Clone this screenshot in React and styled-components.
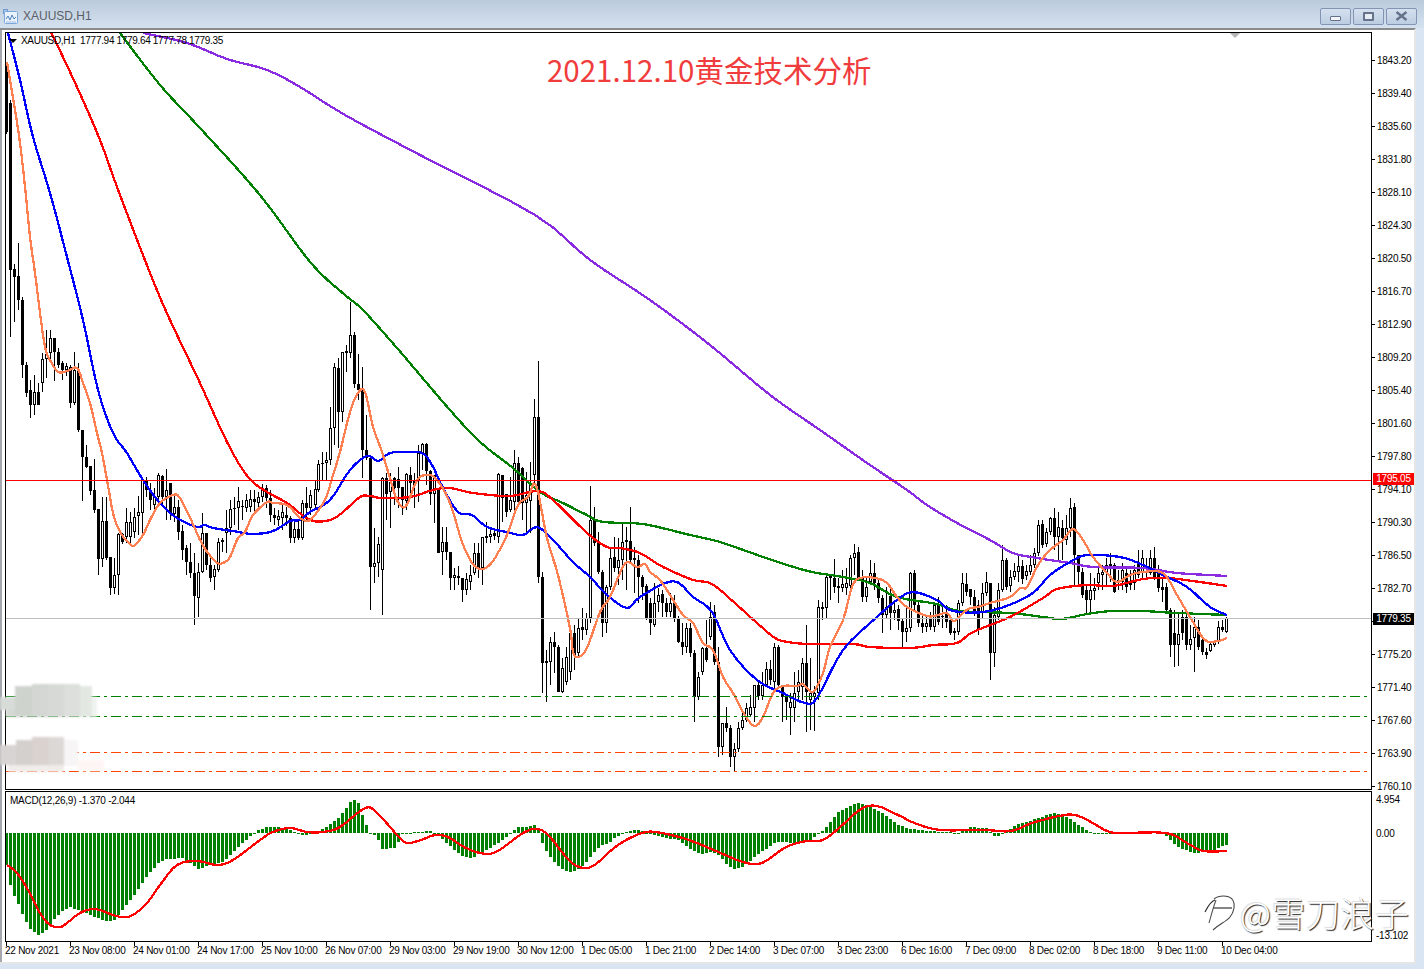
import React from 'react';
import styled, { createGlobalStyle } from 'styled-components';

// [x, bodyTop, bodyBottom, high, low, hollow]
const CANDLES = [
  [6,68,132,62,134,0],[10,103,270,100,337,0],[14,269,277,264,322,0],[18,276,300,243,310,0],[22,300,365,297,378,0],
  [26,365,393,362,397,0],[30,390,405,380,418,0],[34,392,405,375,415,1],[38,392,405,383,405,0],[42,359,383,353,392,1],
  [46,354,359,330,378,1],[50,338,353,330,362,1],[54,338,352,338,381,0],[58,352,365,348,368,0],[62,363,370,361,380,0],
  [66,366,370,363,376,1],[70,367,403,365,408,0],[74,370,403,352,405,1],[78,370,430,363,432,0],[82,430,457,430,501,0],
  [86,457,467,445,468,0],[90,466,491,466,495,0],[94,490,510,459,513,0],[98,509,559,509,575,0],[102,521,559,497,567,1],
  [106,521,558,497,560,0],[110,557,588,557,595,0],[114,575,588,558,594,1],[118,534,575,533,595,1],[122,534,542,533,544,0],
  [126,522,537,508,543,1],[130,522,537,512,543,1],[134,517,532,508,538,1],[138,512,516,496,535,1],[142,480,513,477,535,1],
  [146,480,490,477,497,0],[150,490,500,483,510,0],[154,497,505,488,512,1],[158,475,497,473,507,1],[162,476,497,475,505,0],
  [166,490,497,469,520,1],[170,483,513,483,520,0],[174,507,514,493,522,1],[178,507,532,500,540,0],[182,531,550,525,560,0],
  [186,548,562,545,575,0],[190,562,573,543,578,0],[194,573,596,553,625,0],[198,572,598,563,617,1],[202,533,572,513,573,1],
  [206,533,565,533,570,0],[210,565,578,558,582,0],[214,569,577,565,590,1],[218,542,570,538,572,1],[222,540,542,538,552,0],
  [226,528,533,510,553,1],[230,509,528,500,535,1],[234,508,509,497,525,0],[238,501,508,487,530,1],[242,506,507,500,520,0],
  [246,500,508,494,512,1],[250,499,507,490,512,1],[254,499,502,490,512,0],[258,497,503,492,510,1],[262,488,497,484,502,1],
  [266,488,498,485,508,0],[270,498,515,490,522,0],[274,515,518,508,525,0],[278,516,520,510,526,1],[282,512,518,505,530,1],
  [286,515,518,507,526,0],[290,518,538,516,543,0],[294,529,538,520,543,1],[298,529,538,520,540,0],[302,503,538,500,540,1],
  [306,503,508,487,520,0],[310,495,508,490,515,1],[315,489,505,480,510,1],[318,464,490,460,492,1],[322,463,464,452,480,0],
  [326,460,463,452,480,1],[330,428,460,407,465,1],[334,367,428,363,445,1],[338,368,412,358,448,0],[342,352,412,352,422,1],
  [346,351,353,345,372,0],[350,335,353,302,358,1],[354,335,384,332,388,0],[358,384,390,354,400,0],[362,389,450,367,478,0],
  [366,450,458,415,460,0],[370,458,567,458,610,0],[374,563,567,528,583,1],[378,544,563,537,577,1],[382,478,570,477,615,1],
  [386,478,494,473,520,0],[390,482,492,473,528,1],[394,478,488,477,505,0],[398,479,488,467,508,0],[402,487,500,487,515,0],
  [406,474,501,473,510,1],[410,475,483,467,495,0],[414,481,485,473,508,0],[418,453,480,445,502,1],[422,444,453,443,470,1],
  [426,444,471,443,485,0],[430,471,494,470,505,0],[434,475,494,475,523,1],[438,488,553,488,553,0],[442,542,552,527,575,1],
  [446,542,552,527,560,0],[450,552,578,552,590,0],[454,575,578,568,590,1],[458,576,578,566,585,0],[462,578,590,578,602,0],
  [466,579,590,573,595,1],[470,575,582,565,590,1],[474,553,573,543,575,1],[478,553,568,543,578,0],[482,537,568,537,585,1],
  [486,536,538,522,543,0],[490,534,537,528,543,1],[494,533,536,528,540,0],[498,474,537,473,543,1],[502,475,498,475,522,0],
  [506,494,512,494,517,0],[510,500,510,477,512,1],[514,463,502,450,512,1],[518,463,502,457,505,0],[522,468,503,467,520,0],
  [526,495,503,472,533,1],[530,484,501,462,533,1],[534,417,475,399,485,1],[538,417,577,361,583,0],[542,577,663,572,693,0],
  [546,661,663,650,702,0],[550,642,662,637,685,1],[554,642,647,632,673,0],[558,647,692,645,692,0],[562,668,692,658,693,1],
  [566,657,682,647,685,1],[570,633,672,625,680,1],[574,633,655,625,670,0],[578,628,653,618,658,1],[582,627,630,608,640,0],
  [586,618,630,613,635,1],[590,520,618,486,623,1],[594,520,543,507,546,0],[598,543,572,532,574,0],[602,572,623,570,637,0],
  [606,587,623,585,633,1],[610,558,587,547,590,1],[614,557,568,537,572,0],[618,560,568,538,585,1],[622,542,560,522,580,1],
  [626,540,542,527,590,0],[630,541,560,507,563,0],[634,558,560,547,593,0],[638,560,577,555,603,0],[642,577,587,575,600,0],
  [646,586,619,584,620,0],[650,603,623,598,635,0],[654,603,625,583,627,1],[658,595,602,588,612,1],[662,594,603,590,617,0],
  [666,603,612,598,617,0],[670,603,612,593,617,1],[674,603,618,595,622,0],[678,618,642,616,643,0],[682,642,647,623,655,0],
  [686,628,647,623,653,1],[690,628,653,623,657,0],[694,653,697,650,722,0],[698,677,697,672,700,1],[702,648,672,647,675,1],
  [706,648,660,620,662,0],[710,617,637,602,640,1],[714,612,662,605,665,0],[718,662,747,647,757,0],[722,723,747,723,755,1],
  [726,723,728,707,732,0],[730,728,757,725,767,0],[734,749,757,743,772,1],[738,728,749,722,752,1],[742,720,728,710,730,1],
  [746,708,720,703,722,1],[750,707,715,695,717,1],[754,685,708,685,722,1],[758,685,696,680,700,0],[762,685,696,672,700,1],
  [766,669,685,662,687,1],[770,669,680,660,685,0],[774,647,682,643,690,1],[778,647,685,645,688,0],[782,685,697,685,722,0],
  [786,696,702,696,720,0],[790,702,708,693,735,1],[794,693,708,672,722,1],[798,682,692,670,702,1],[802,663,687,658,700,1],
  [806,663,692,625,732,0],[810,693,700,658,730,1],[814,693,697,686,731,1],[818,607,693,600,700,1],[822,607,609,602,620,0],
  [826,577,608,573,618,1],[830,576,578,575,600,0],[834,578,587,559,593,0],[838,586,588,578,603,0],[842,584,588,570,592,1],
  [846,583,588,568,595,1],[850,558,586,555,592,1],[854,553,558,544,575,1],[858,552,578,547,580,0],[862,578,597,570,602,0],
  [866,587,597,578,602,1],[870,573,582,560,585,1],[874,573,583,563,590,0],[878,583,598,578,603,0],[882,598,615,595,633,0],
  [886,607,615,587,618,1],[890,596,613,587,630,0],[894,610,613,600,620,1],[898,609,621,605,630,0],[902,621,632,618,648,0],
  [906,628,632,607,642,1],[910,573,628,572,632,1],[914,573,605,570,612,0],[918,605,623,600,627,0],[922,623,627,613,633,0],
  [926,623,627,617,632,1],[930,619,627,612,630,0],[934,605,627,603,632,1],[938,605,622,597,625,0],[942,616,617,605,628,0],
  [946,612,622,605,628,0],[950,620,633,618,635,0],[954,631,633,628,640,1],[958,603,632,600,635,1],[962,583,603,573,606,1],
  [966,584,592,573,596,0],[970,589,597,589,605,0],[974,597,612,590,616,0],[978,605,630,600,635,0],[982,593,613,583,618,1],
  [986,582,593,572,596,1],[990,583,653,583,680,0],[994,615,653,607,667,1],[998,590,617,583,620,1],[1002,560,590,545,592,1],
  [1006,560,587,558,590,0],[1010,577,586,570,592,1],[1014,571,577,563,580,1],[1018,566,572,555,582,1],[1022,566,579,560,584,0],
  [1026,571,576,565,580,1],[1030,565,572,555,575,1],[1034,553,565,548,568,1],[1038,525,553,520,556,1],[1042,524,545,520,548,0],
  [1046,532,544,528,547,1],[1050,518,532,517,535,1],[1054,518,537,508,550,0],[1058,527,537,512,560,1],[1062,528,538,520,560,0],
  [1066,528,540,515,545,1],[1070,508,528,498,537,1],[1074,507,555,503,585,0],[1078,555,572,555,585,0],[1082,572,595,568,598,0],
  [1086,590,600,585,613,0],[1090,590,600,573,612,1],[1094,588,591,578,600,1],[1098,573,583,564,590,1],[1102,572,575,565,590,1],
  [1106,565,573,558,585,1],[1110,564,566,553,582,0],[1114,565,592,563,593,0],[1118,580,583,570,590,1],[1122,570,582,563,590,1],
  [1126,573,587,568,593,0],[1130,582,585,570,590,0],[1134,570,583,565,590,1],[1138,562,575,550,578,0],[1142,558,573,550,578,1],
  [1146,566,568,558,578,0],[1150,558,573,550,575,1],[1154,558,578,547,580,0],[1158,570,588,565,592,0],[1162,587,590,577,602,0],
  [1166,587,610,583,612,0],[1170,610,645,608,657,0],[1174,633,645,610,667,0],[1178,634,645,613,666,1],[1182,617,633,610,640,0],
  [1186,617,645,610,650,0],[1190,639,645,625,650,1],[1194,627,638,617,672,1],[1198,627,647,620,650,0],[1202,640,652,639,655,0],
  [1206,652,655,648,659,0],[1210,644,651,643,652,1],[1214,641,645,640,647,1],[1218,627,642,621,644,1],[1222,627,630,620,632,0],
  [1226,618,632,617,633,1],
];

const ORANGE = [[7,62],[15,110],[20,143],[25,187],[30,237],[35,273],[40,313],[45,347],[50,360],[58,372],[67,371],[77,368],[83,383],[90,403],[97,433],[102,453],[107,480],[114,517],[122,535],[131,545],[135,545],[143,535],[150,520],[160,503],[173,495],[180,498],[192,522],[200,540],[208,553],[217,563],[223,563],[230,557],[238,538],[245,532],[253,515],[267,502],[273,503],[287,505],[297,515],[303,520],[310,520],[320,508],[327,495],[333,475],[340,452],[350,412],[358,393],[365,392],[373,427],[382,452],[392,485],[398,502],[406,506],[417,480],[427,475],[435,478],[445,492],[453,512],[462,542],[472,563],[480,569],[487,567],[495,558],[507,535],[518,505],[528,497],[536,485],[547,538],[558,575],[570,628],[573,652],[578,657],[587,648],[600,612],[610,597],[620,573],[627,562],[637,567],[645,564],[650,572],[660,580],[670,595],[683,615],[693,623],[703,643],[713,650],[723,677],[733,693],[743,712],[754,726],[763,717],[773,693],[783,686],[797,686],[803,684],[813,692],[823,673],[830,647],[843,620],[852,587],[860,578],[875,578],[887,583],[897,597],[907,607],[927,616],[938,615],[947,613],[953,621],[958,618],[968,609],[978,607],[990,603],[1010,597],[1020,588],[1027,587],[1038,565],[1050,550],[1063,540],[1073,529],[1083,540],[1093,557],[1107,573],[1117,582],[1130,575],[1143,572],[1163,573],[1177,595],[1190,617],[1205,640],[1218,641],[1227,638]];
const BLUE = [[8,33],[20,80],[33,137],[50,193],[67,257],[83,320],[98,390],[113,433],[127,453],[143,480],[160,503],[177,518],[197,527],[204,525],[213,528],[233,531],[253,534],[273,531],[290,521],[300,520],[310,512],[330,500],[350,470],[367,456],[378,461],[390,453],[407,452],[422,453],[432,465],[443,488],[458,512],[472,515],[487,527],[507,532],[523,535],[537,527],[553,540],[573,562],[590,577],[607,595],[627,608],[640,597],[673,581],[693,597],[712,612],[730,650],[757,680],[783,693],[805,703],[817,698],[843,650],[877,617],[897,600],[913,592],[937,600],[953,611],[990,611],[1030,595],[1050,575],[1070,562],[1087,555],[1120,557],[1143,565],[1163,575],[1187,587],[1210,607],[1227,615]];
const RED = [[50,30],[77,87],[100,140],[117,187],[150,273],[170,320],[200,383],[227,442],[248,477],[267,492],[287,503],[310,520],[330,520],[343,512],[360,497],[370,496],[382,498],[410,497],[433,490],[450,488],[473,493],[510,496],[537,491],[553,500],[587,533],[607,547],[620,548],[640,553],[663,567],[693,580],[712,584],[737,605],[757,623],[775,638],[788,642],[810,644],[853,644],[870,647],[910,648],[933,645],[957,643],[973,632],[1010,617],[1043,598],[1057,589],[1087,585],[1113,586],[1143,579],[1167,578],[1200,582],[1227,586]];
const GREEN = [[120,33],[160,85],[200,128],[260,195],[310,262],[345,295],[363,310],[397,348],[420,375],[450,410],[480,442],[513,468],[540,492],[563,503],[587,515],[603,522],[643,524],[690,535],[720,542],[763,557],[797,568],[817,573],[843,577],[870,583],[897,597],[937,604],[960,611],[1010,613],[1043,617],[1062,619],[1087,614],[1112,611],[1143,611],[1177,613],[1227,615]];
const PURPLE = [[143,33],[187,43],[227,59],[267,70],[300,87],[345,115],[420,155],[535,215],[590,260],[650,300],[710,345],[770,395],[820,430],[870,465],[907,490],[927,505],[957,523],[990,540],[1013,553],[1037,558],[1070,563],[1093,567],[1143,568],[1177,573],[1227,576]];

const HIST = [[6,865],[10,885],[14,896],[18,904],[22,914],[26,922],[30,929],[38,935],[46,930],[54,919],[62,911],[70,907],[78,910],[90,915],[106,921],[114,920],[122,910],[134,895],[146,877],[158,863],[166,859],[182,858],[190,863],[198,869],[206,866],[222,862],[230,855],[238,847],[250,836],[254,833],[258,830],[266,827],[278,827],[290,830],[298,834],[306,835],[318,832],[322,829],[330,824],[338,818],[346,808],[350,802],[354,800],[358,803],[362,815],[366,825],[370,834],[374,835],[378,840],[382,849],[394,848],[398,842],[402,833],[421,832],[429,831],[435,833],[443,840],[454,850],[464,857],[472,858],[480,853],[491,847],[502,840],[510,833],[518,827],[526,827],[534,825],[540,833],[542,843],[547,853],[555,863],[563,870],[569,872],[577,870],[585,863],[593,853],[601,845],[609,843],[614,838],[622,833],[636,830],[641,831],[649,834],[662,837],[678,840],[692,850],[700,854],[711,852],[719,855],[727,865],[735,869],[743,867],[753,858],[764,850],[775,842],[786,842],[796,844],[807,842],[820,833],[826,827],[837,813],[847,807],[858,803],[869,806],[885,815],[898,825],[909,829],[930,831],[957,833],[970,827],[986,828],[995,837],[1003,833],[1016,825],[1032,820],[1053,813],[1067,817],[1086,830],[1096,834],[1118,833],[1131,834],[1147,832],[1163,833],[1177,847],[1193,853],[1209,852],[1219,847],[1227,845]];
const SIGNAL = [[7,865],[17,873],[28,890],[40,913],[50,925],[60,927],[67,923],[80,913],[95,909],[113,915],[123,917],[133,915],[147,903],[160,885],[177,865],[197,861],[217,865],[233,860],[260,840],[273,832],[290,828],[307,832],[323,832],[340,827],[365,808],[377,813],[400,838],[408,843],[421,840],[435,835],[448,837],[464,847],[480,853],[496,852],[523,833],[538,829],[550,837],[566,857],[579,867],[593,866],[614,848],[630,838],[646,832],[662,833],[689,840],[716,851],[743,862],[762,863],[786,847],[807,841],[823,840],[839,828],[861,809],[877,806],[898,815],[917,824],[941,830],[984,830],[1011,831],[1032,823],[1059,816],[1075,815],[1091,822],[1107,831],[1120,833],[1166,833],[1187,843],[1203,851],[1227,851]];

const LEVELS = [
  { y: 696, color: '#008000' },
  { y: 716, color: '#008000' },
  { y: 752, color: '#ff4500' },
  { y: 771, color: '#ff4500' },
];

// pixelated smudge covering the level labels, page coordinates
const SMUDGE = [
  [0,697,16,13,'#d8dcd8'],[6,710,10,7,'#d4d8d3'],[15,686,17,31,'#cfd3ce'],[32,684,16,33,'#d3d6d2'],[48,684,16,33,'#d6d9d6'],[64,684,16,33,'#dcdfdc'],[80,686,12,31,'#e3e8e3'],[92,697,5,20,'#eff3ef'],
  [0,745,16,20,'#d8d4d3'],[16,740,16,25,'#d4d0ce'],[32,737,16,28,'#d9d2ce'],[48,737,16,28,'#dcd8d5'],[64,740,14,26,'#f7f5f6'],[78,760,26,11,'#fdf6f4'],[8,765,56,7,'#f0ecea'],
];

// the 1779.00 row sits under the black bid tag, only its tick shows
const PRICES = ['1843.20','1839.40','1835.60','1831.80','1828.10','1824.30','1820.50','1816.70','1812.90','1809.20','1805.40','1801.60','1797.80','1794.10','1790.30','1786.50','1782.70','','1775.20','1771.40','1767.60','1763.90','1760.10'];
const TIMES = ['22 Nov 2021','23 Nov 08:00','24 Nov 01:00','24 Nov 17:00','25 Nov 10:00','26 Nov 07:00','29 Nov 03:00','29 Nov 19:00','30 Nov 12:00','1 Dec 05:00','1 Dec 21:00','2 Dec 14:00','3 Dec 07:00','3 Dec 23:00','6 Dec 16:00','7 Dec 09:00','8 Dec 02:00','8 Dec 18:00','9 Dec 11:00','10 Dec 04:00'];

// catmull-rom through the hand read points, sampled back to a polyline
const toPoints = (line) => {
  const out = [];
  for (let i = 0; i < line.length - 1; i++) {
    const p0 = line[Math.max(i - 1, 0)];
    const p1 = line[i];
    const p2 = line[i + 1];
    const p3 = line[Math.min(i + 2, line.length - 1)];
    for (let t = 0; t < 1; t += 0.25) {
      const c = (k) =>
        0.5 * (2 * p1[k] + (p2[k] - p0[k]) * t + (2 * p0[k] - 5 * p1[k] + 4 * p2[k] - p3[k]) * t * t + (3 * p1[k] - p0[k] - 3 * p2[k] + p3[k]) * t * t * t);
      out.push(`${c(0).toFixed(1)},${c(1).toFixed(1)}`);
    }
  }
  out.push(line[line.length - 1].join(','));
  return out.join(' ');
};

const valueAt = (line, x) => {
  for (let i = 1; i < line.length; i++) {
    if (x <= line[i][0]) {
      const [x0, y0] = line[i - 1];
      const [x1, y1] = line[i];
      return Math.round(y0 + ((x - x0) / (x1 - x0)) * (y1 - y0));
    }
  }
  return line[line.length - 1][1];
};

const histBars = () => {
  const bars = [];
  for (let x = 6; x <= 1226; x += 4) {
    bars.push({ x, y: valueAt(HIST, x) });
  }
  return bars;
};

const Candle = ({ x, top, bottom, high, low, hollow }) => (
  <g>
    <rect x={x} y={high} width={1} height={low - high} fill="#000" />
    {hollow ? (
      <rect x={x - 0.5} y={top + 0.5} width={2} height={Math.max(bottom - top - 1, 1)} fill="#fff" stroke="#000" strokeWidth={1} />
    ) : (
      <rect x={x - 1} y={top} width={3} height={Math.max(bottom - top, 1)} fill="#000" />
    )}
  </g>
);

const PriceChart = () => (
  <ChartSvg viewBox="6 33 1365 756" width="1365" height="756">
    <g shapeRendering="crispEdges">
      {CANDLES.map(([x, top, bottom, high, low, hollow]) => (
        <Candle key={x} x={x} top={top} bottom={bottom} high={high} low={low} hollow={hollow} />
      ))}
      <MaLine points={toPoints(PURPLE)} stroke="#8a2be2" />
      <MaLine points={toPoints(GREEN)} stroke="#008000" />
      <MaLine points={toPoints(RED)} stroke="#ff0000" />
      <MaLine points={toPoints(BLUE)} stroke="#0000ff" />
      <MaLine points={toPoints(ORANGE)} stroke="#ff7f50" />
      <rect x="6" y="480" width="1365" height="1" fill="#ff0000" />
      <rect x="6" y="618" width="1365" height="1" fill="#c0c0c0" />
      {LEVELS.map((l) => (
        <line key={l.y} x1="6" x2="1371" y1={l.y + 0.5} y2={l.y + 0.5} stroke={l.color} strokeWidth="1" strokeDasharray="10 4 3 4" />
      ))}
    </g>
  </ChartSvg>
);

const MacdChart = () => (
  <ChartSvg viewBox="6 792 1365 149" width="1365" height="149">
    <g shapeRendering="crispEdges">
      {histBars().map(({ x, y }) => (
        <rect key={x} x={x - 1} y={Math.min(y, 833)} width={3} height={Math.max(Math.abs(y - 833), 1)} fill="#008000" />
      ))}
      <MaLine points={toPoints(SIGNAL)} stroke="#ff0000" />
    </g>
  </ChartSvg>
);

const WindowIcon = () => (
  <svg width="15" height="15" viewBox="0 0 15 15">
    <rect x="0.5" y="0.5" width="4" height="4" fill="#a9c6ea" stroke="#6f9bd2" />
    <rect x="1.5" y="2.5" width="13" height="12" rx="1" fill="#eaf2fb" stroke="#7ba6dc" />
    <path d="M3 10 L5 7 L7 11 L9 6 L11 10 L13 8" fill="none" stroke="#4d82c4" />
    <path d="M3 13 H13" stroke="#9dbde4" />
  </svg>
);

const CloseIcon = () => (
  <svg width="13" height="10" viewBox="0 0 13 10">
    <path d="M1.5 1 L11.5 9 M11.5 1 L1.5 9" stroke="#66728a" strokeWidth="2.4" />
  </svg>
);

const Logo = () => (
  <svg width="32" height="38" viewBox="0 0 32 38" fill="none" stroke="#222" strokeWidth="1.1">
    <path d="M1 18 C4 12 7 7 11 6" />
    <path d="M10 5 C15 1 24 1 28 5 C32 10 30 18 26 23 C22 28 15 30 9 36" stroke="#444" />
    <path d="M9 14 H28" />
    <path d="M12 6 C9 14 7 22 5 29" stroke="#555" />
  </svg>
);

const Smudge = () => (
  <SmudgeLayer width="110" height="100" viewBox="0 680 110 100" shapeRendering="crispEdges">
    {SMUDGE.map(([x, y, w, h, fill]) => (
      <rect key={`${x}-${y}`} x={x} y={y} width={w} height={h} fill={fill} />
    ))}
  </SmudgeLayer>
);

export default function App() {
  return (
    <Page>
      <GlobalStyle />
      <TitleBar>
        <WindowIcon />
        <WindowTitle>XAUUSD,H1</WindowTitle>
        <WindowButtons>
          <WindowButton><MinGlyph /></WindowButton>
          <WindowButton><MaxGlyph /></WindowButton>
          <WindowButton><CloseIcon /></WindowButton>
        </WindowButtons>
      </TitleBar>
      <Client>
        <ChartGrid>
          <MainPane>
            <PriceChart />
            <Legend>
              <LegendArrow />
              XAUUSD,H1&nbsp; 1777.94 1779.64 1777.78 1779.35
            </Legend>
            <ChartTitle>2021.12.10黄金技术分析</ChartTitle>
            <ShiftMark />
          </MainPane>
          <PriceAxis>
            {PRICES.map((p, i) => (
              <AxisLabel key={i}>{p}</AxisLabel>
            ))}
            <PriceTag $top={441} $bg="#ff0000">1795.05</PriceTag>
            <PriceTag $top={581} $bg="#000">1779.35</PriceTag>
          </PriceAxis>
          <MacdPane>
            <MacdChart />
            <MacdLegend>MACD(12,26,9) -1.370 -2.044</MacdLegend>
          </MacdPane>
          <MacdAxis>
            <MacdLabel $gap={4}>4.954</MacdLabel>
            <MacdLabel $gap={24}>0.00</MacdLabel>
            <MacdLabel $gap={92}>-13.102</MacdLabel>
          </MacdAxis>
          <TimeAxis>
            {TIMES.map((t) => (
              <TimeLabel key={t}>{t}</TimeLabel>
            ))}
          </TimeAxis>
        </ChartGrid>
      </Client>
      <Smudge />
      <Watermark>
        <Logo />
        <WatermarkText>@雪刀浪子</WatermarkText>
      </Watermark>
    </Page>
  );
}

const GlobalStyle = createGlobalStyle`
  html, body {
    margin: 0;
    padding: 0;
    background: #d9e5f3;
  }
`;

const Page = styled.div`
  position: relative;
  width: 1424px;
  height: 969px;
  overflow: hidden;
  display: flex;
  flex-direction: column;
  background: #d9e5f3;
  font-family: "Liberation Sans", Arial, sans-serif;
`;

const TitleBar = styled.div`
  height: 28px;
  flex: none;
  display: flex;
  align-items: center;
  padding: 4px 7px 0 3px;
  box-sizing: border-box;
  background: linear-gradient(#bccbdc, #d3e1ef);
`;

const WindowTitle = styled.span`
  margin-left: 5px;
  font-size: 12px;
  color: #5c6066;
`;

const WindowButtons = styled.div`
  margin-left: auto;
  display: flex;
  gap: 2px;
`;

const WindowButton = styled.div`
  width: 31px;
  height: 17px;
  box-sizing: border-box;
  display: flex;
  align-items: center;
  justify-content: center;
  border: 1px solid #8494b4;
  border-radius: 2px;
  background: linear-gradient(#d5e0ee, #bccde2);
`;

const MinGlyph = styled.div`
  width: 11px;
  height: 5px;
  margin-top: 4px;
  box-sizing: border-box;
  background: #f2f5f9;
  border: 1px solid #66728a;
  border-radius: 1px;
`;

const MaxGlyph = styled.div`
  width: 11px;
  height: 9px;
  box-sizing: border-box;
  border: 2px solid #66728a;
  border-radius: 1px;
  background: #e6edf5;
`;

const Client = styled.div`
  width: 1416px;
  height: 936px;
  box-sizing: border-box;
  padding: 2px 0 0 5px;
  background: #fff;
  border-top: 2px solid #8b8b8b;
  border-bottom: 2px solid #e4e6e8;
  border-right: 2px solid #e4e6e8;
  box-shadow: inset 2px 0 0 #a6a8b0;
`;

const ChartGrid = styled.div`
  display: grid;
  grid-template-columns: 1367px 42px;
  grid-template-rows: 758px 151px 21px;
  row-gap: 1px;
`;

const MainPane = styled.div`
  position: relative;
  border: 1px solid #000;
  overflow: hidden;
`;

const MacdPane = styled(MainPane)``;

const ChartSvg = styled.svg`
  display: block;
`;

const MaLine = styled.polyline`
  fill: none;
  stroke-width: 2.3;
  stroke-linejoin: round;
`;

const SmudgeLayer = styled.svg`
  position: absolute;
  left: 0;
  top: 680px;
  filter: blur(0.8px);
`;

const Legend = styled.div`
  position: absolute;
  left: 15px;
  top: 1px;
  font-size: 10px;
  line-height: 13px;
  letter-spacing: -0.3px;
  word-spacing: -0.2px;
  white-space: nowrap;
  color: #000;
`;

const LegendArrow = styled.span`
  position: absolute;
  left: -12px;
  top: 5px;
  border-left: 4px solid transparent;
  border-right: 4px solid transparent;
  border-top: 4px solid #000;
`;

const ChartTitle = styled.div`
  position: absolute;
  left: 541px;
  top: 15px;
  font-family: "Noto Sans CJK SC", sans-serif;
  font-size: 29.5px;
  line-height: 42px;
  white-space: nowrap;
  color: #f03c3c;
`;

const ShiftMark = styled.div`
  position: absolute;
  left: 1224px;
  top: 0;
  border-left: 5px solid transparent;
  border-right: 5px solid transparent;
  border-top: 5px solid #b4b4b4;
`;

const PriceAxis = styled.div`
  position: relative;
  padding-top: 12px;
  font-size: 10px;
  letter-spacing: -0.25px;
`;

const AxisLabel = styled.div`
  position: relative;
  height: 33px;
  line-height: 33px;
  padding-left: 5px;
  white-space: nowrap;

  &::before {
    content: '';
    position: absolute;
    left: 0;
    top: 16px;
    width: 3px;
    height: 1px;
    background: #000;
  }
`;

const PriceTag = styled.div`
  position: absolute;
  left: 1px;
  top: ${(p) => p.$top}px;
  width: 41px;
  height: 12px;
  line-height: 12px;
  text-align: center;
  color: #fff;
  background: ${(p) => p.$bg};
`;

const MacdAxis = styled.div`
  font-size: 10px;
  letter-spacing: -0.25px;
`;

const MacdLabel = styled.div`
  height: 10px;
  line-height: 10px;
  margin-top: ${(p) => p.$gap}px;
  padding-left: 4px;
  white-space: nowrap;
`;

const MacdLegend = styled.div`
  position: absolute;
  left: 4px;
  top: 2px;
  font-size: 10px;
  line-height: 13px;
  letter-spacing: -0.25px;
  white-space: nowrap;
`;

const TimeAxis = styled.div`
  grid-column: 1 / span 2;
  display: flex;
  font-size: 10px;
  letter-spacing: -0.25px;
`;

const TimeLabel = styled.div`
  position: relative;
  flex: none;
  width: 64px;
  padding-top: 1px;
  box-sizing: border-box;
  line-height: 13px;
  white-space: nowrap;

  &::before {
    content: '';
    position: absolute;
    left: 1px;
    top: -1px;
    width: 1px;
    height: 4px;
    background: #000;
  }
`;

const Watermark = styled.div`
  position: absolute;
  left: 1204px;
  top: 897px;
  height: 32px;
  display: flex;
  align-items: center;
  gap: 4px;
`;

const WatermarkText = styled.span`
  font-family: "Noto Sans CJK SC", sans-serif;
  font-weight: 300;
  font-size: 34px;
  line-height: 32px;
  letter-spacing: 0.5px;
  white-space: nowrap;
  color: #fff;
  text-shadow: 1px 1px 1px #222, -1px -1px 1px #ddd;
`;
